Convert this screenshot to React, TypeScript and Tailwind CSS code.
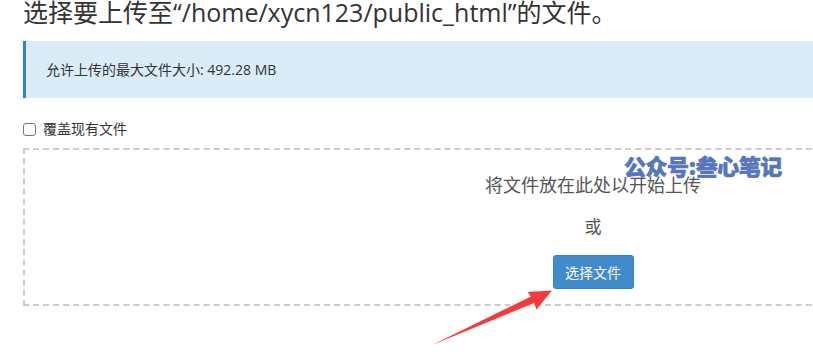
import React from "react";

const font = { fontFamily: '"Open Sans", "Noto Sans CJK SC", sans-serif' };

export default function App() {
  return (
    <div
      className="relative w-[813px] h-[352px] overflow-hidden bg-white text-[#333]"
      style={font}
    >
      <div className="w-[1186px] px-[23px]">
        <h1 className="text-[25px] leading-[26px] h-[26px] -mt-[1px] font-normal text-[#333] whitespace-nowrap">
          选择要上传至“/home/xycn123/public_html”的文件。
        </h1>
        <div className="mt-[16px] h-[57px] flex items-center bg-[#d9ecf8] border-l-[3px] border-[#2f84c6] pl-[20px] text-[14px] text-[#333]">
          允许上传的最大文件大小: 492.28 MB
        </div>
        <label className="mt-[24px] flex items-center h-[14px] gap-[7px] text-[14px] text-[#333]">
          <span className="w-[13px] h-[13px] rounded-[3px] border border-[#767676] bg-white" />
          <span className="leading-[14px]">覆盖现有文件</span>
        </label>
        <div className="mt-[12px] h-[158px] border-2 border-dashed border-[#cccccc] flex flex-col items-center pt-[22px]">
          <div className="text-[18px] leading-[26px] text-[#555]">将文件放在此处以开始上传</div>
          <div className="mt-[16px] text-[17px] leading-[26px] text-[#555]">或</div>
          <button className="mt-[15px] w-[81px] h-[34px] rounded-[3px] bg-[#428bca] text-white text-[14px] border border-[#3b7fbf]">
            选择文件
          </button>
        </div>
      </div>

      <div
        className="absolute left-[624px] top-[153px] text-[22px] leading-[24px] font-black text-[#5575bd] tracking-[-0.5px] whitespace-nowrap"
        style={{ fontFamily: '"Noto Sans CJK SC", sans-serif', WebkitTextStroke: "0.6px #5575bd" }}
      >
        公众号:叁心笔记
      </div>

      <svg className="absolute left-0 top-0" width="813" height="352" viewBox="0 0 813 352">
        <polygon
          points="432,345 531,296.5 527.5,292 552,290.5 536.5,309.5 534,303"
          fill="#f43a3a"
        />
      </svg>
    </div>
  );
}
